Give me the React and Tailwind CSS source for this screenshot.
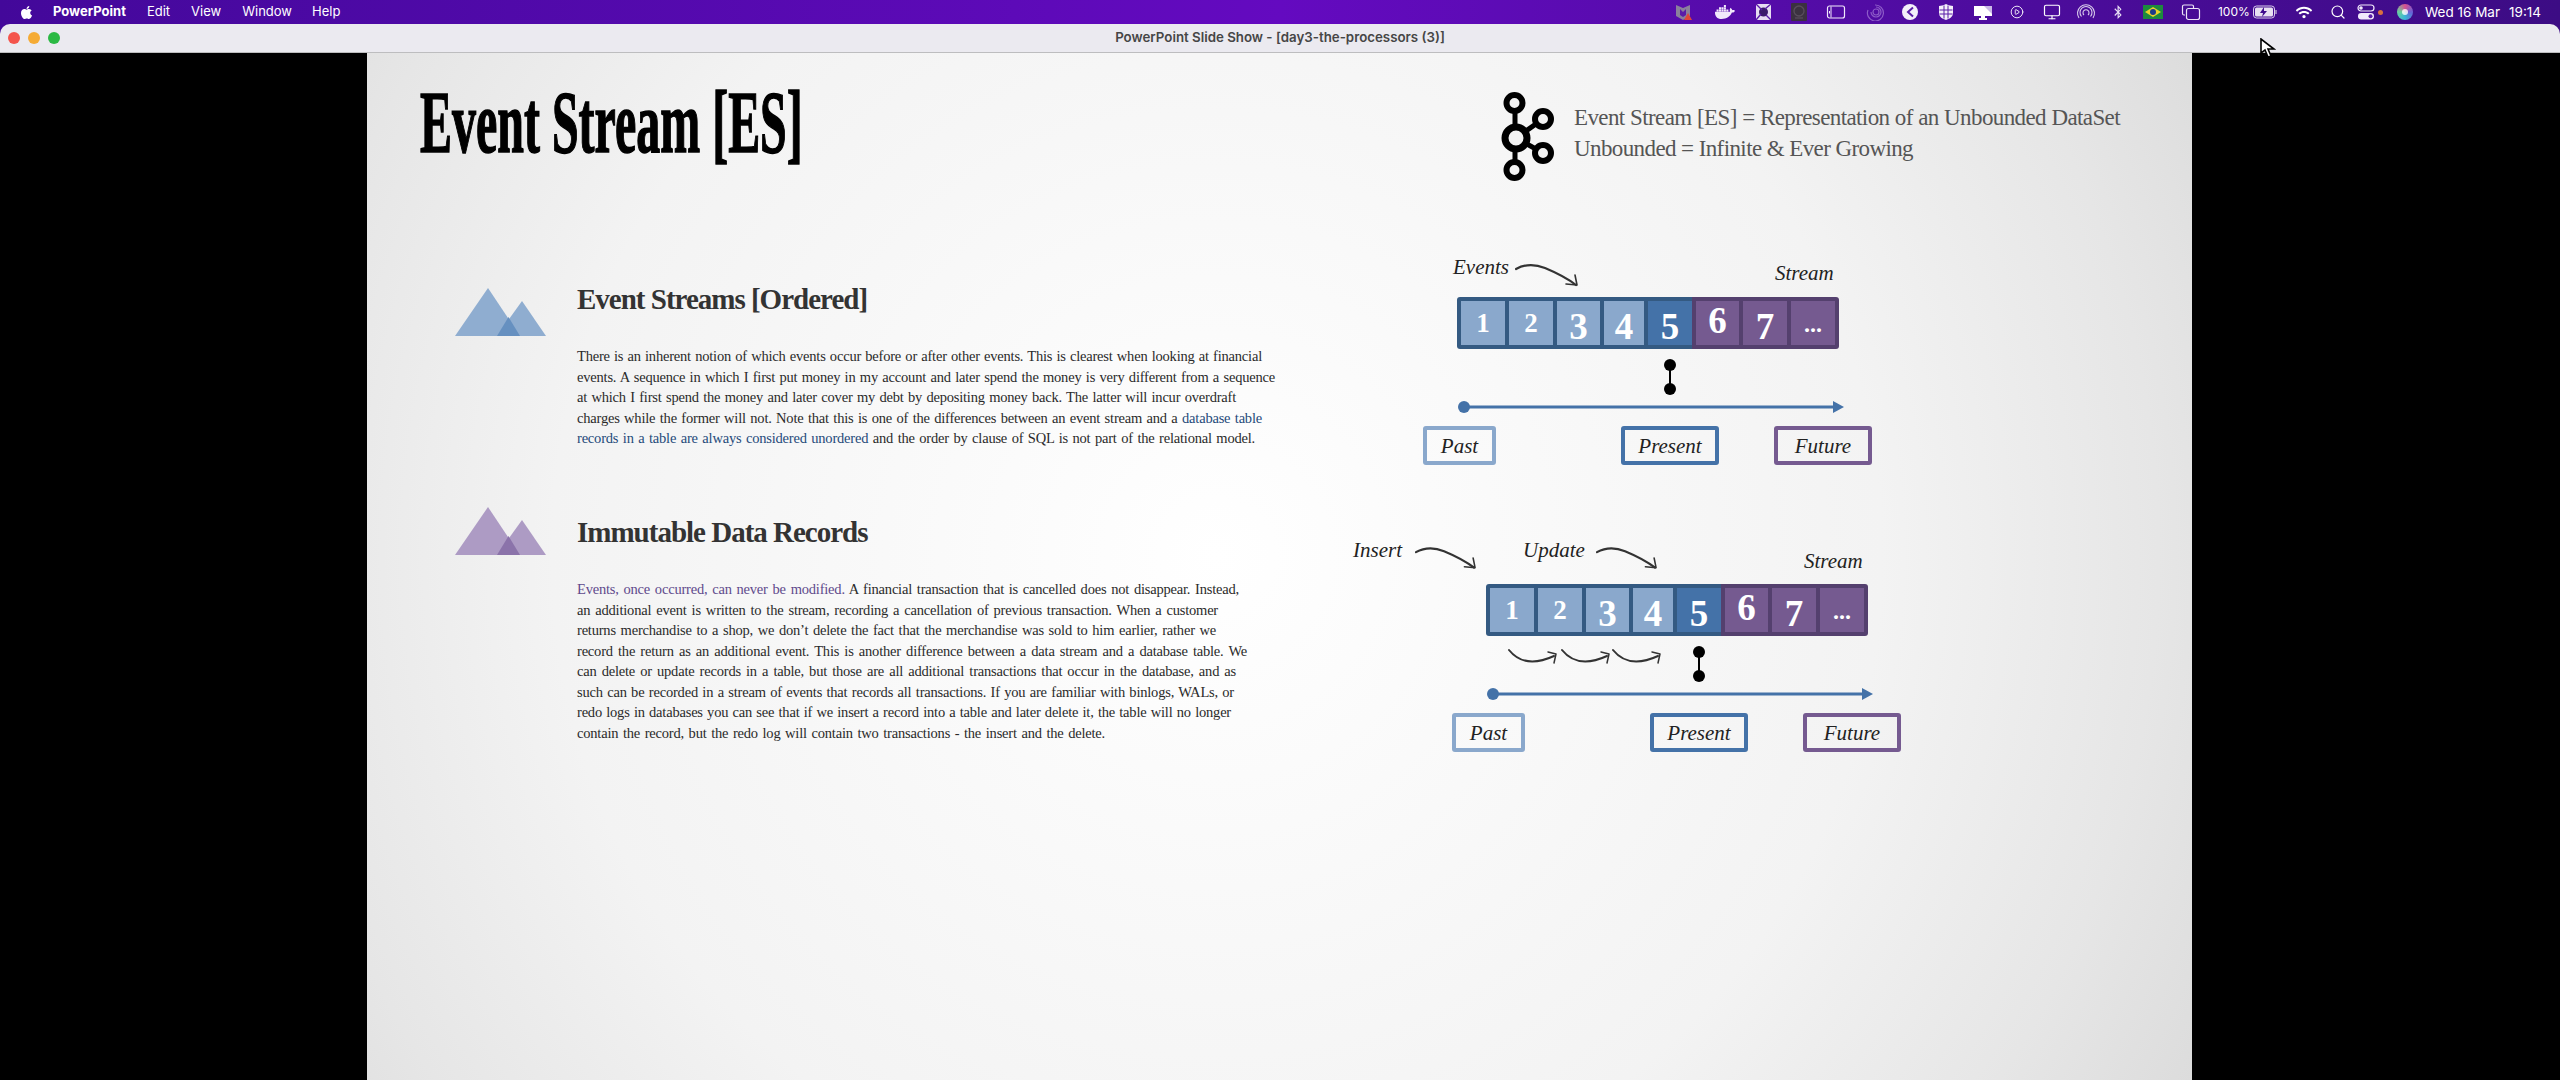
import React from "react";
import { FaApple, FaDocker, FaWifi, FaBluetoothB } from "react-icons/fa";
import { CirclePlay, Monitor, Search } from "lucide-react";

const serif = "font-['Liberation_Serif',serif]";
const ui = "font-['Inter','Liberation_Sans',sans-serif]";

const TextLine = ({ width, children }) => (
  <p className={`${width} h-[20.5px] leading-[20.5px] whitespace-nowrap [text-align-last:justify]`}>{children}</p>
);

const Mountains = ({ big, small, overlap }) => (
  <svg width="91" height="48" viewBox="0 0 91 48" className="block">
    <path d="M0 48 L33 0 L65 48 Z" fill={big} />
    <path d="M42 48 L67 13 L91 48 Z" fill={small} />
    <path d="M42 48 L53.5 29 L65 48 Z" fill={overlap} />
  </svg>
);

const CurvedArrow = ({ className }) => (
  <svg viewBox="0 0 64 24" className={className} fill="none" stroke="#333" strokeLinecap="round">
    <path d="M1 6 C 10 1, 20 1, 30 5 C 42 10, 52 15, 61 22" strokeWidth="2.2" />
    <path d="M62 22 L60 12 M62 22 L51 21" strokeWidth="1.6" />
  </svg>
);

const SmallArrow = ({ className }) => (
  <svg viewBox="0 0 50 17" className={className} fill="none" stroke="#333" strokeLinecap="round">
    <path d="M1 2 C 9 12, 22 19, 46 8" strokeWidth="2" />
    <path d="M48 6 L40 4 M48 6 L46 15" strokeWidth="1.5" />
  </svg>
);

const scriptText = `${serif} italic text-[21px] leading-[26px] text-[#222]`;

const blueCells = [
  { n: "1", w: "w-[44px]", bg: "bg-[#8aa8cc]", t: "text-[27px] pt-[1px]" },
  { n: "2", w: "w-[44px]", bg: "bg-[#8aa8cc]", t: "text-[27px] pt-[1px]" },
  { n: "3", w: "w-[43px]", bg: "bg-[#8aa8cc]", t: "text-[37px] pt-[6px]" },
  { n: "4", w: "w-[40px]", bg: "bg-[#8aa8cc]", t: "text-[37px] pt-[6px]" },
  { n: "5", w: "w-[44px]", bg: "bg-[#4472a8]", t: "text-[37px] pt-[6px]" },
];

const purpleCells = [
  { n: "6", w: "w-[43px]", t: "text-[37px] pb-[5px]" },
  { n: "7", w: "w-[44px]", t: "text-[37px] pt-[6px]" },
  { n: "...", w: "w-[44px]", t: "text-[24px] pt-[2px]" },
];

const Cell = ({ n, w, bg, t }) => (
  <div className={`${w} ${bg} h-[44px] flex items-center justify-center text-white font-bold leading-none ${serif} ${t}`}>{n}</div>
);

const StreamDiagram = ({ className, children }) => (
  <div className={`relative w-[449px] h-[207px] pt-[39px] shrink-0 ${className}`}>
    {children}
    <div className="flex ml-[34px] w-[383px] h-[52px]">
      <div className="flex gap-[4px] pl-[4px] py-[4px] bg-[#345a82] rounded-l-[3px]">
        {blueCells.map((c) => <Cell key={c.n} {...c} />)}
      </div>
      <div className="flex gap-[4px] px-[4px] py-[4px] bg-[#54406e] rounded-r-[3px]">
        {purpleCells.map((c) => <Cell key={c.n} bg="bg-[#755a90]" {...c} />)}
      </div>
    </div>
    <svg width="12" height="36" viewBox="0 0 12 36" className="block mt-[10px] ml-[241px]">
      <path d="M6 6 V30" stroke="#000" strokeWidth="2" />
      <circle cx="6" cy="6" r="6" fill="#000" />
      <circle cx="6" cy="30" r="6" fill="#000" />
    </svg>
    <svg width="386" height="12" viewBox="0 0 386 12" className="block mt-[6px] ml-[35px]">
      <circle cx="6" cy="6" r="6" fill="#4472a8" />
      <path d="M6 6 H376" stroke="#4472a8" strokeWidth="3" />
      <path d="M375 0 L386 6 L375 12 Z" fill="#4472a8" />
    </svg>
    <div className="flex mt-[13px]">
      <div className={`w-[73px] h-[39px] border-4 border-[#8aa8cc] rounded-[3px] flex items-center justify-center ${scriptText}`}>Past</div>
      <div className={`w-[98px] h-[39px] ml-[125px] border-4 border-[#4472a8] rounded-[3px] flex items-center justify-center ${scriptText}`}>Present</div>
      <div className={`w-[98px] h-[39px] ml-[55px] border-4 border-[#755a90] rounded-[3px] flex items-center justify-center ${scriptText}`}>Future</div>
    </div>
  </div>
);

const KafkaLogo = () => (
  <svg width="57" height="90" viewBox="0 0 57 90" fill="none" stroke="#000" className="shrink-0 mt-[39px]">
    <path d="M16 18 V78 M17 46 L44 27 M17 46 L44 61" strokeWidth="5" />
    <circle cx="15.5" cy="11" r="8" strokeWidth="6" fill="#f3f3f3" />
    <circle cx="44" cy="27" r="8" strokeWidth="6" fill="#f3f3f3" />
    <circle cx="17" cy="46" r="11" strokeWidth="7" fill="#f3f3f3" />
    <circle cx="44" cy="61" r="8" strokeWidth="6" fill="#f3f3f3" />
    <circle cx="15.5" cy="78" r="8" strokeWidth="6" fill="#f3f3f3" />
  </svg>
);

const MenuBar = () => (
  <div className={`h-[24px] flex items-center text-white text-[13px] ${ui}`}>
    <FaApple className="ml-[19px] w-[15px] h-[15px]" />
    <span className="ml-[19px] font-bold">PowerPoint</span>
    <span className="ml-[21px]">Edit</span>
    <span className="ml-[21px]">View</span>
    <span className="ml-[21px]">Window</span>
    <span className="ml-[20px]">Help</span>
    <div className="ml-auto flex items-center pr-[19px]">
      {/* menu extras */}
      <svg width="20" height="18" viewBox="0 0 20 18">
        <path d="M3 2 L10 5 L17 2 V13 L10 17 L3 13 Z" fill="#8a7f9c" />
        <path d="M7 6 L10 9 L13 6 V12 L10 14 L7 12 Z" fill="#5a1ca8" />
        <path d="M15 10 L19 17 H11 Z" fill="#e0453a" />
      </svg>
      <FaDocker className="ml-[22px] w-[20px] h-[18px] text-[#f1e9fb]" />
      <svg width="20" height="18" viewBox="0 0 20 18" className="ml-[18px]">
        <rect x="3" y="1" width="15" height="16" fill="#e6dcf2" />
        <circle cx="10.5" cy="9" r="4.5" fill="#3a1a6a" />
        <path d="M3 1 L9 7 M18 1 L12 6 M3 17 L8 11 M18 17 L13 12" stroke="#5a1ca8" strokeWidth="1.4" />
      </svg>
      <svg width="20" height="18" viewBox="0 0 20 18" className="ml-[16px]">
        <rect x="2" y="0" width="16" height="18" rx="1" fill="#3b3140" />
        <circle cx="10" cy="8" r="5" fill="none" stroke="#584d5c" strokeWidth="1.3" />
        <path d="M6 15 H14" stroke="#584d5c" strokeWidth="1.3" />
      </svg>
      <svg width="20" height="18" viewBox="0 0 20 18" className="ml-[17px]">
        <rect x="1.5" y="3" width="17" height="12" rx="2" fill="none" stroke="#f1e9fb" strokeWidth="1.2" />
        <path d="M5 3.5 V14.5" stroke="#f1e9fb" strokeWidth="1" />
        <rect x="3" y="8" width="1" height="2.5" fill="#f1e9fb" />
      </svg>
      <svg width="20" height="18" viewBox="0 0 20 18" className="ml-[19px]" fill="none" stroke="#8d5cc8" strokeWidth="1.2">
        <circle cx="11" cy="9" r="3" />
        <path d="M3 7 A8 8 0 1 0 10 2 M6 9 A5 5 0 1 0 11 4" />
      </svg>
      <svg width="20" height="18" viewBox="0 0 20 18" className="ml-[15px]">
        <circle cx="10" cy="9" r="8" fill="#f4effa" />
        <path d="M13 4.5 L8 9 L13 13.5" fill="none" stroke="#5a1ca8" strokeWidth="2" />
      </svg>
      <svg width="20" height="18" viewBox="0 0 20 18" className="ml-[16px]">
        <path d="M10 1 C13 2.5 15 2.5 17 3 V10 C17 14 13 16 10 17 C7 16 3 14 3 10 V3 C5 2.5 7 2.5 10 1 Z" fill="#f4effa" />
        <path d="M3.5 7 H16.5 M3.5 11 H16.5 M8 2.5 V15.5 M12 2.5 V15.5" stroke="#5a1ca8" strokeWidth="1" />
      </svg>
      <svg width="20" height="18" viewBox="0 0 20 18" className="ml-[17px]">
        <path d="M1 3 H19 V13 H12 V15 H14 V17 H6 V15 H8 V13 H1 Z" fill="#fff" />
        <path d="M11 3 L19 3 L19 11 Z" fill="#c9b9e6" />
      </svg>
      <CirclePlay className="ml-[17px] w-[14px] h-[14px]" strokeWidth={1.5} />
      <Monitor className="ml-[19px] w-[18px] h-[18px]" strokeWidth={1.6} />
      <svg width="20" height="18" viewBox="0 0 20 18" className="ml-[15px]" fill="none" stroke="#d9cdeb" strokeWidth="1.1">
        <path d="M3 15 A8.5 8.5 0 1 1 17 15 M5.5 13.5 A6 6 0 1 1 14.5 13.5 M8 12 A3 3 0 1 1 12 12" />
      </svg>
      <FaBluetoothB className="ml-[12px] w-[20px] h-[14px] text-[#e7def4]" />
      <svg width="20" height="14" viewBox="0 0 20 14" className="ml-[15px]">
        <rect width="20" height="14" fill="#1d8a3e" />
        <path d="M10 2 L18 7 L10 12 L2 7 Z" fill="#e9d22a" />
        <circle cx="10" cy="7" r="3" fill="#1c3a8a" />
      </svg>
      <svg width="20" height="18" viewBox="0 0 20 18" className="ml-[18px]" fill="none" stroke="#ece4f6" strokeWidth="1.2">
        <path d="M4 12 H3 A1.5 1.5 0 0 1 1.5 10.5 V3.5 A1.5 1.5 0 0 1 3 2 H11 A1.5 1.5 0 0 1 12.5 3.5 V5" />
        <rect x="5.5" y="5.5" width="13" height="11" rx="2" />
      </svg>
      <span className="ml-[17px] text-[12px] w-[30px] whitespace-nowrap">100%</span>
      <svg width="25" height="14" viewBox="0 0 25 14" className="ml-[5px]">
        <rect x="0.5" y="1" width="21" height="12" rx="3" fill="none" stroke="#d9cdeb" />
        <rect x="2" y="2.5" width="18" height="9" rx="1.5" fill="#e8e0f2" />
        <path d="M23 5 V9" stroke="#b9a9d2" strokeWidth="1.4" />
        <path d="M11 2 L7 8 H10 L9 12 L14 6 H11 Z" fill="#3f0c8c" />
      </svg>
      <FaWifi className="ml-[16px] w-[20px] h-[13px]" />
      <Search className="ml-[16px] w-[16px] h-[16px]" strokeWidth={1.8} />
      <svg width="20" height="18" viewBox="0 0 20 18" className="ml-[10px]">
        <rect x="2" y="2" width="16" height="6" rx="3" fill="none" stroke="#f1e9fb" strokeWidth="1.2" />
        <circle cx="5" cy="5" r="1.8" fill="#f1e9fb" />
        <rect x="2" y="10" width="16" height="6.5" rx="3.2" fill="#f1e9fb" />
        <circle cx="14.5" cy="13.2" r="2" fill="#5a1ca8" />
      </svg>
      <span className="ml-[2px] w-[5px] h-[5px] rounded-full bg-[#d9703f]" />
      <span className="ml-[14px] w-[16px] h-[16px] rounded-full bg-[conic-gradient(#d9508f,#6a5fd6,#38b6d8,#68d0a0,#d9508f)] flex items-center justify-center">
        <span className="w-[6px] h-[6px] rounded-full bg-white/80" />
      </span>
      <span className="ml-[12px] whitespace-nowrap text-[13.5px]">Wed 16 Mar</span>
      <span className="ml-[9px] text-[13.5px]">19:14</span>
    </div>
  </div>
);

const App = () => {
  return (
    <div className="relative w-[2560px] h-[1080px] overflow-hidden bg-black flex flex-col">
      <div className="bg-gradient-to-r from-[#43089a] via-[#640ac0] to-[#3c0c84]">
        <MenuBar />
        <div className="relative h-[29px] bg-[#ebeaf0] rounded-t-[10px] border-b border-[#bdbdbf] flex items-center justify-center">
          <div className="absolute left-[8px] top-[8px] flex gap-[8px]">
            <span className="w-[12px] h-[12px] rounded-full bg-[#f4544c]" />
            <span className="w-[12px] h-[12px] rounded-full bg-[#f5ab35]" />
            <span className="w-[12px] h-[12px] rounded-full bg-[#2bb944]" />
          </div>
          <span className={`text-[13.3px] font-semibold text-[#464646] ${ui}`}>PowerPoint Slide Show - [day3-the-processors (3)]</span>
        </div>
      </div>

      <div className={`ml-[367px] w-[1825px] flex-1 bg-[radial-gradient(circle_at_850px_502px,#ffffff_0%,#f9f9f9_30%,#f3f3f3_60%,#e6e6e6_85%,#dcdcdc_100%)] ${serif}`}>
        <div className="flex h-[205px]">
          <div className="w-[1132px] pl-[53px] pt-[26px] shrink-0">
            <h1 className="origin-left scale-x-[0.545] text-[88px] leading-[88px] font-bold text-black whitespace-nowrap [-webkit-text-stroke:1.5px_black]">Event Stream [ES]</h1>
          </div>
          <KafkaLogo />
          <div className="ml-[18px] mt-[49px] text-[23px] tracking-[-0.6px] leading-[31px] text-[#555]">
            <p className="w-[546px] whitespace-nowrap [text-align-last:justify]">Event Stream [ES] = Representation of an Unbounded DataSet</p>
            <p className="w-[339px] whitespace-nowrap [text-align-last:justify]">Unbounded = Infinite &amp; Ever Growing</p>
          </div>
        </div>

        <div className="flex h-[249px] pl-[88px]">
          <div className="w-[122px] pt-[30px] shrink-0">
            <Mountains big="#8fadd0" small="#8fadd0" overlap="#6690c0" />
          </div>
          <div className="w-[846px] pt-[23px] shrink-0">
            <h2 className="text-[29px] tracking-[-1px] leading-[36px] font-bold text-[#333]">Event Streams [Ordered]</h2>
            <div className="mt-[29px] text-[14.5px] tracking-[-0.2px] text-[#2a2a2a]">
              <TextLine width="w-[685px]">There is an inherent notion of which events occur before or after other events. This is clearest when looking at financial</TextLine>
              <TextLine width="w-[698px]">events. A sequence in which I first put money in my account and later spend the money is very different from a sequence</TextLine>
              <TextLine width="w-[659px]">at which I first spend the money and later cover my debt by depositing money back. The latter will incur overdraft</TextLine>
              <TextLine width="w-[685px]">charges while the former will not. Note that this is one of the differences between an event stream and a <span className="text-[#1f4a7a]">database table</span></TextLine>
              <TextLine width="w-[678px]"><span className="text-[#1f4a7a]">records in a table are always considered unordered</span> and the order by clause of SQL is not part of the relational model.</TextLine>
            </div>
          </div>
          <StreamDiagram>
            <span className={`absolute left-[30px] top-[-4px] ${scriptText}`}>Events</span>
            <CurvedArrow className="absolute left-[92px] top-[5px] w-[64px] h-[24px]" />
            <span className={`absolute left-[352px] top-[2px] ${scriptText}`}>Stream</span>
          </StreamDiagram>
        </div>

        <div className="flex pl-[88px]">
          <div className="w-[122px] shrink-0">
            <Mountains big="#ad9bc4" small="#ad9bc4" overlap="#8b73aa" />
          </div>
          <div className="w-[875px] pt-[7px] shrink-0">
            <h2 className="text-[29px] tracking-[-1px] leading-[36px] font-bold text-[#333]">Immutable Data Records</h2>
            <div className="mt-[29px] text-[14.5px] tracking-[-0.2px] text-[#2a2a2a]">
              <TextLine width="w-[662px]"><span className="text-[#5f4a8c]">Events, once occurred, can never be modified.</span> A financial transaction that is cancelled does not disappear. Instead,</TextLine>
              <TextLine width="w-[641px]">an additional event is written to the stream, recording a cancellation of previous transaction. When a customer</TextLine>
              <TextLine width="w-[639px]">returns merchandise to a shop, we don’t delete the fact that the merchandise was sold to him earlier, rather we</TextLine>
              <TextLine width="w-[670px]">record the return as an additional event. This is another difference between a data stream and a database table. We</TextLine>
              <TextLine width="w-[659px]">can delete or update records in a table, but those are all additional transactions that occur in the database, and as</TextLine>
              <TextLine width="w-[657px]">such can be recorded in a stream of events that records all transactions. If you are familiar with binlogs, WALs, or</TextLine>
              <TextLine width="w-[654px]">redo logs in databases you can see that if we insert a record into a table and later delete it, the table will no longer</TextLine>
              <TextLine width="w-[528px]">contain the record, but the redo log will contain two transactions - the insert and the delete.</TextLine>
            </div>
          </div>
          <StreamDiagram className="mt-[38px]">
            <span className={`absolute left-[-99px] top-[-8px] ${scriptText}`}>Insert</span>
            <CurvedArrow className="absolute left-[-37px] top-[1px] w-[62px] h-[24px]" />
            <span className={`absolute left-[71px] top-[-8px] ${scriptText}`}>Update</span>
            <CurvedArrow className="absolute left-[144px] top-[1px] w-[62px] h-[24px]" />
            <span className={`absolute left-[352px] top-[3px] ${scriptText}`}>Stream</span>
            <SmallArrow className="absolute left-[56px] top-[103px] w-[50px] h-[17px]" />
            <SmallArrow className="absolute left-[109px] top-[103px] w-[50px] h-[17px]" />
            <SmallArrow className="absolute left-[160px] top-[103px] w-[50px] h-[17px]" />
          </StreamDiagram>
        </div>
      </div>

      {/* mouse pointer */}
      <svg width="16" height="20" viewBox="0 0 16 20" className="absolute left-[2260px] top-[38px]">
        <path d="M1 1 L1 15 L5 12 L8 19 L11 18 L8 11 L14 11 Z" fill="#fff" stroke="#000" strokeWidth="1.6" />
      </svg>
    </div>
  );
};

export default App;
